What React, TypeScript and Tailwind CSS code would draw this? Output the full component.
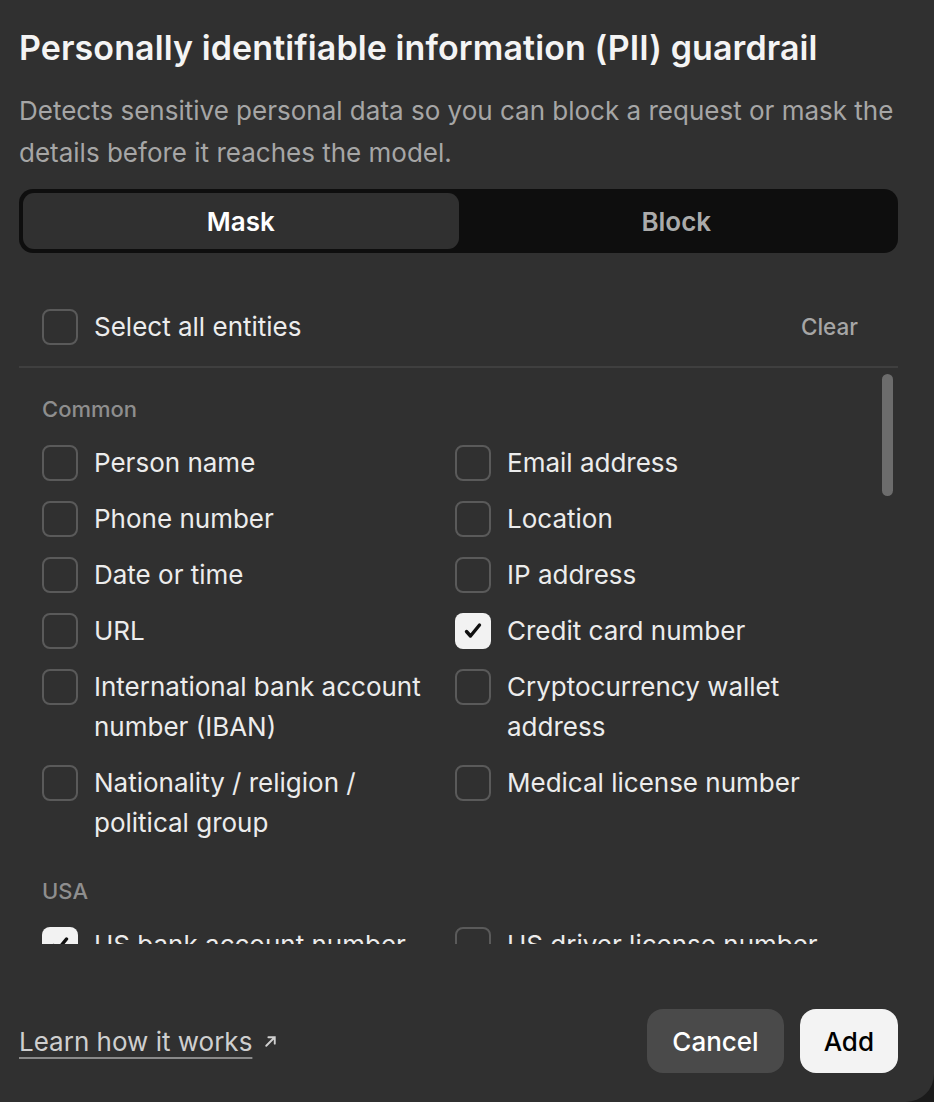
import { useState } from 'react';

type Entity = { id: string; label: string; checked?: boolean };

const common: Entity[] = [
  { id: 'person', label: 'Person name' },
  { id: 'email', label: 'Email address' },
  { id: 'phone', label: 'Phone number' },
  { id: 'location', label: 'Location' },
  { id: 'date', label: 'Date or time' },
  { id: 'ip', label: 'IP address' },
  { id: 'url', label: 'URL' },
  { id: 'card', label: 'Credit card number', checked: true },
  { id: 'iban', label: 'International bank account number (IBAN)' },
  { id: 'crypto', label: 'Cryptocurrency wallet address' },
  { id: 'nrp', label: 'Nationality / religion / political group' },
  { id: 'medical', label: 'Medical license number' },
];

const usa: Entity[] = [
  { id: 'us_bank', label: 'US bank account number', checked: true },
  { id: 'us_driver', label: 'US driver license number' },
  { id: 'us_itin', label: 'US ITIN' },
  { id: 'us_passport', label: 'US passport number' },
];

function Checkbox({ checked, className = '' }: { checked: boolean; className?: string }) {
  return (
    <span
      className={
        (checked
          ? 'flex h-9 w-9 shrink-0 items-center justify-center rounded-lg bg-[#f2f2f2] '
          : 'flex h-9 w-9 shrink-0 items-center justify-center rounded-lg border-2 border-[#5a5a5a] ') + className
      }
    >
      {checked && (
        <svg viewBox="0 0 24 24" className="h-6 w-6" fill="none" stroke="#111" strokeWidth={3.4} strokeLinecap="round" strokeLinejoin="round">
          <path d="M5.5 12.5l4 4.5 9-11" />
        </svg>
      )}
    </span>
  );
}

function EntityRow({ item, checked, onToggle }: { item: Entity; checked: boolean; onToggle: () => void }) {
  return (
    <button onClick={onToggle} className="flex items-start gap-4 text-left">
      <Checkbox checked={checked} className="mt-[2px]" />
      <span className="text-[26px] leading-[40px] text-[#ececec]">{item.label}</span>
    </button>
  );
}

function Section({ title, items, state, toggle }: { title: string; items: Entity[]; state: Record<string, boolean>; toggle: (id: string) => void }) {
  return (
    <div>
      <div className="mb-[20px] text-[22px] leading-[28px] font-medium text-[#8e8e8e]">{title}</div>
      <div className="grid grid-cols-2 gap-x-4 gap-y-4">
        {items.map((it) => (
          <EntityRow key={it.id} item={it} checked={!!state[it.id]} onToggle={() => toggle(it.id)} />
        ))}
      </div>
    </div>
  );
}

export default function App() {
  const [mode, setMode] = useState<'mask' | 'block'>('mask');
  const [state, setState] = useState<Record<string, boolean>>(() => {
    const s: Record<string, boolean> = {};
    [...common, ...usa].forEach((e) => (s[e.id] = !!e.checked));
    return s;
  });
  const toggle = (id: string) => setState((p) => ({ ...p, [id]: !p[id] }));

  return (
    <div className="min-h-screen bg-[#1b1b1b]" style={{ fontFamily: 'Inter, "Noto Sans", sans-serif' }}>
      <div className="flex h-[1102px] w-[934px] flex-col rounded-br-[28px] bg-[#303030] pl-[19px] pr-[36px] pt-[28px]">
        {/* Header */}
        <h1 className="text-[34px] leading-[40px] font-semibold tracking-[0.1px] text-[#f4f4f4]">
          Personally identifiable information (PII) guardrail
        </h1>
        <p className="mt-[22px] text-[26px] leading-[42px] text-[#a6a6a6]">
          Detects sensitive personal data so you can block a request or mask the details before it reaches the model.
        </p>

        {/* Mask / Block */}
        <div className="mt-[15px] flex h-[64px] rounded-[14px] bg-[#0e0e0e] p-1">
          <button
            onClick={() => setMode('mask')}
            className={`flex-1 rounded-[11px] text-[26px] font-semibold ${mode === 'mask' ? 'bg-[#303030] text-white' : 'text-[#ababab]'}`}
          >
            Mask
          </button>
          <button
            onClick={() => setMode('block')}
            className={`flex-1 rounded-[11px] text-[26px] font-semibold ${mode === 'block' ? 'bg-[#303030] text-white' : 'text-[#ababab]'}`}
          >
            Block
          </button>
        </div>

        {/* Select all */}
        <div className="mt-[54px] flex items-center justify-between pl-[23px] pr-[40px]">
          <div className="flex items-center gap-4">
            <Checkbox checked={false} />
            <span className="text-[26px] text-[#ececec]">Select all entities</span>
          </div>
          <button className="text-[22.5px] font-medium text-[#a6a6a6]">Clear</button>
        </div>
        <div className="mt-[20px] h-[2px] bg-[#3f3f3f]" />

        {/* Scroll list */}
        <div className="relative h-[576px] overflow-hidden">
          <div className="space-y-[34px] pl-[23px] pr-[46px] pt-[27px]">
            <Section title="Common" items={common} state={state} toggle={toggle} />
            <Section title="USA" items={usa} state={state} toggle={toggle} />
          </div>
          <div className="absolute right-[5px] top-[6px] h-[122px] w-[11px] rounded-full bg-[#6c6c6c]" />
        </div>

        {/* Footer */}
        <div className="mt-auto mb-[29px] flex items-center justify-between">
          <a className="flex items-center gap-[10px] text-[26px] text-[#cfcfcf]">
            <span className="underline decoration-2 underline-offset-[6px] decoration-[#8a8a8a]">Learn how it works</span>
            <svg viewBox="0 0 16 16" className="h-[17px] w-[17px]" fill="none" stroke="#cfcfcf" strokeWidth={1.8} strokeLinecap="round">
              <path d="M4 12L12 4M6 4h6v6" />
            </svg>
          </a>
          <div className="flex gap-4">
            <button className="h-[64px] rounded-[16px] bg-[#4a4a4a] px-[25px] text-[26px] font-medium text-white">Cancel</button>
            <button className="h-[64px] rounded-[16px] bg-[#f3f3f3] px-[24px] text-[26px] font-medium text-black">Add</button>
          </div>
        </div>
      </div>
    </div>
  );
}
